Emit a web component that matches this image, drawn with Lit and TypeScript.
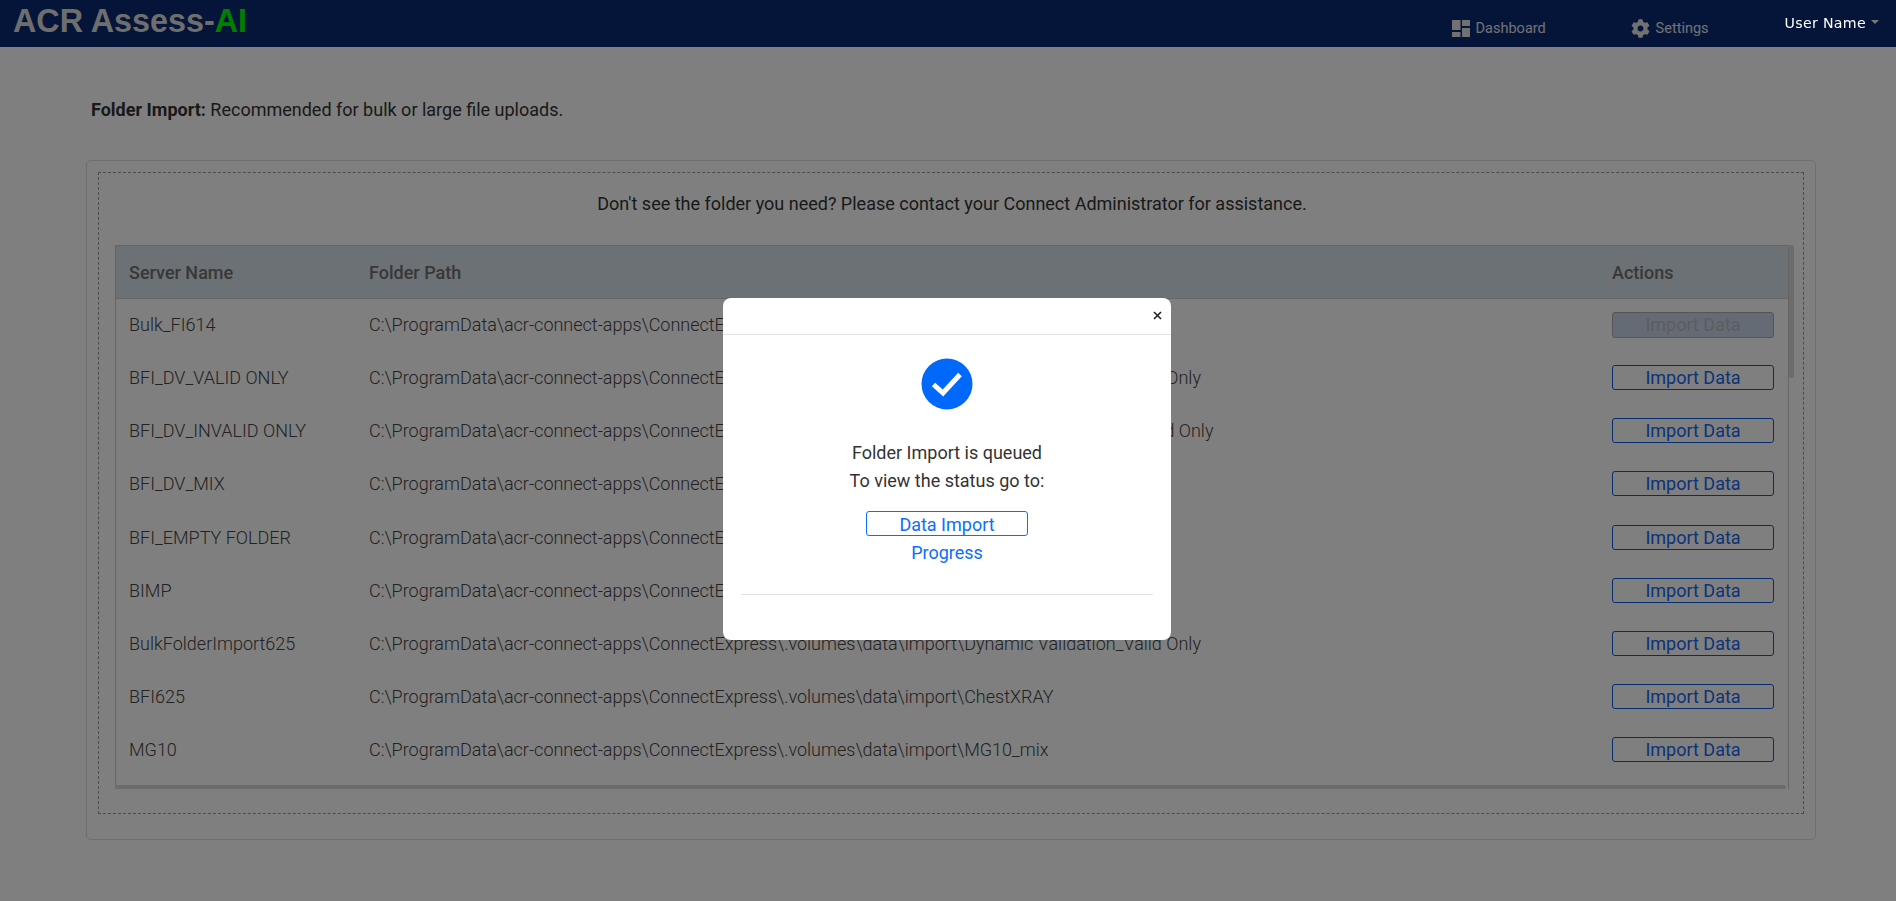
import {LitElement, html, css} from 'lit';
import {customElement} from 'lit/decorators.js';

const BASE = 'C:\\ProgramData\\acr-connect-apps\\ConnectExpress\\.volumes\\data\\import\\';

const rows = [
  {name: 'Bulk_FI614', path: 'Bulk_FI614', disabled: true},
  {name: 'BFI_DV_VALID ONLY', path: 'Dynamic Validation_Valid Only'},
  {name: 'BFI_DV_INVALID ONLY', path: 'Dynamic Validation_Invalid Only'},
  {name: 'BFI_DV_MIX', path: 'BFI_DV_MIX'},
  {name: 'BFI_EMPTY FOLDER', path: 'Empty'},
  {name: 'BIMP', path: 'BIMP'},
  {name: 'BulkFolderImport625', path: 'Dynamic Validation_Valid Only'},
  {name: 'BFI625', path: 'ChestXRAY'},
  {name: 'MG10', path: 'MG10_mix'},
];

const GEAR = 'M487.4 315.7l-42.6-24.6c4.3-23.2 4.3-47 0-70.2l42.6-24.6c4.9-2.8 7.1-8.6 5.5-14-11.1-35.6-30-67.8-54.7-94.6-3.8-4.1-10-5.1-14.8-2.3L380.8 110c-17.9-15.4-38.5-27.3-60.8-35.1V25.8c0-5.6-3.9-10.5-9.4-11.7-36.7-8.2-74.3-7.8-109.2 0-5.5 1.2-9.4 6.1-9.4 11.7V75c-22.2 7.9-42.8 19.8-60.8 35.1L88.7 85.5c-4.9-2.8-11-1.9-14.8 2.3-24.7 26.7-43.6 58.9-54.7 94.6-1.7 5.4.6 11.2 5.5 14L67.3 221c-4.3 23.2-4.3 47 0 70.2l-42.6 24.6c-4.9 2.8-7.1 8.6-5.5 14 11.1 35.6 30 67.8 54.7 94.6 3.8 4.1 10 5.1 14.8 2.3l42.6-24.6c17.9 15.4 38.5 27.3 60.8 35.1v49.2c0 5.6 3.9 10.5 9.4 11.7 36.7 8.2 74.3 7.8 109.2 0 5.5-1.2 9.4-6.1 9.4-11.7v-49.2c22.2-7.9 42.8-19.8 60.8-35.1l42.6 24.6c4.9 2.8 11 1.9 14.8-2.3 24.7-26.7 43.6-58.9 54.7-94.6 1.5-5.5-.7-11.3-5.6-14.1zM256 336c-44.1 0-80-35.9-80-80s35.9-80 80-80 80 35.9 80 80-35.9 80-80 80z';

@customElement('app-root')
export class AppRoot extends LitElement {
  static styles = css`
    :host {
      display: block;
      height: 901px;
      overflow: hidden;
      background: #fff;
      color: #333;
      font-family: Roboto, "Liberation Sans", sans-serif;
      font-size: 18px;
    }

    .navbar {
      display: flex;
      height: 47px;
      background: #0a2a74;
      color: #fff;
    }
    .logo {
      margin: 2px 0 0 13px;
      font-family: "Liberation Sans", Arial, sans-serif;
      font-size: 32.3px;
      line-height: 38px;
      font-weight: 700;
      flex: 1;
      color: #dcdcdc;
    }
    .logo span { color: #00ff00; }
    .nav-link {
      display: flex;
      align-items: center;
      gap: 6px;
      height: 20px;
      margin-top: 18px;
      font-size: 14.5px;
      color: #e2e2e2;
    }
    .nav-link svg { display: block; fill: #e2e2e2; }
    .dash { width: 179px; }
    .settings { width: 154px; }
    .user {
      position: relative;
      z-index: 20;
      display: flex;
      align-items: center;
      gap: 5px;
      height: 20px;
      margin: 13px 17px 0 0;
      font-family: "DejaVu Sans", sans-serif;
      font-size: 14.2px;
      letter-spacing: 0.3px;
      color: #fff;
    }
    .caret {
      border-top: 4px solid #777;
      border-left: 4px solid transparent;
      border-right: 4px solid transparent;
      margin-top: -2px;
    }

    .content { padding: 53px 80px 0 86px; }
    .intro {
      margin: 0 0 40px 5px;
      line-height: 20px;
    }
    .intro b { font-weight: 700; }

    .card {
      height: 680px;
      box-sizing: border-box;
      padding: 11px;
      border: 1px solid #dcdcdc;
      border-radius: 5px;
    }
    .dashed {
      height: 642px;
      box-sizing: border-box;
      padding: 0 14px 0 16px;
      border: 1px dashed #999;
    }
    .note {
      height: 72px;
      box-sizing: border-box;
      padding-bottom: 12px;
      display: flex;
      align-items: center;
      justify-content: center;
    }

    .table-wrap {
      position: relative;
      height: 544px;
      box-sizing: border-box;
      border: 1px solid #ccc;
      border-bottom: 0;
    }
    table {
      width: 100%;
      border-collapse: collapse;
      table-layout: fixed;
    }
    th {
      height: 52px;
      background: #d8e2ea;
      border-bottom: 1px solid #ccc;
      text-align: left;
      font-weight: 500;
      color: #707070;
      padding: 0 13px;
    }
    td {
      height: 53.2px;
      box-sizing: border-box;
      padding: 0 13px 1.5px;
      font-weight: 300;
      color: #444;
      white-space: nowrap;
    }

    .import {
      display: block;
      box-sizing: border-box;
      width: 162px;
      height: 25px;
      padding: 0;
      border: 1px solid #0a5cd8;
      border-radius: 3px;
      background: transparent;
      color: #1a66f0;
      font: 400 18px/23px Roboto, sans-serif;
    }
    .import[disabled] {
      height: 26px;
      border-color: #aaa;
      background: #c8d6ea;
      color: #bbb;
    }

    .thumb-v {
      position: absolute;
      top: -1px;
      right: -6px;
      width: 5px;
      height: 133px;
      background: #d8d8d8;
      border-radius: 3px;
    }
    .thumb-h {
      position: absolute;
      left: -1px;
      right: 2px;
      bottom: 0;
      height: 4px;
      background: #d8d8d8;
      border-radius: 0 3px 3px 0;
    }

    .backdrop {
      position: fixed;
      inset: 0;
      z-index: 10;
      background: rgba(0, 0, 0, 0.5);
    }
    .modal-wrap {
      position: fixed;
      inset: 0;
      z-index: 15;
      display: flex;
      justify-content: center;
      align-items: flex-start;
      padding: 298px 2px 0 0;
    }
    .modal {
      width: 448px;
      height: 342px;
      background: #fff;
      border-radius: 8px;
      text-align: center;
    }
    .modal-head {
      display: flex;
      justify-content: flex-end;
      align-items: center;
      height: 36px;
      padding-right: 9px;
      border-bottom: 1px solid #e2e2e2;
    }
    .modal-head svg { display: block; margin-top: -1px; }
    .modal-body { padding: 23px 18px 0; }
    .check { display: block; margin: 0 auto 29px; }
    .msg { line-height: 27.5px; }
    .go {
      width: 162px;
      margin: 17px auto 0;
      color: #0d6efd;
      line-height: 27px;
    }
    .go div:first-child {
      box-sizing: border-box;
      height: 25px;
      border: 1px solid #0d6efd;
      border-radius: 3px;
      line-height: 25px;
    }
    .go div:last-child { margin-top: 3px; }
    .rule {
      margin-top: 28px;
      border-top: 1px solid #e2e2e2;
    }
  `;

  protected render() {
    return html`
      <nav class="navbar">
        <div class="logo">ACR Assess-<span>AI</span></div>
        <div class="nav-link dash">
          <svg width="18" height="17" viewBox="0 0 18 17">
            <rect x="0" y="0" width="8.5" height="10"></rect>
            <rect x="10" y="0" width="8" height="6"></rect>
            <rect x="0" y="12" width="8.5" height="5"></rect>
            <rect x="10" y="8" width="8" height="9"></rect>
          </svg>
          Dashboard
        </div>
        <div class="nav-link settings">
          <svg width="19" height="19" viewBox="0 0 512 512"><path d=${GEAR}></path></svg>
          Settings
        </div>
        <div class="user">User Name <span class="caret"></span></div>
      </nav>

      <main class="content">
        <p class="intro"><b>Folder Import:</b> Recommended for bulk or large file uploads.</p>
        <section class="card">
          <div class="dashed">
            <div class="note">Don't see the folder you need? Please contact your Connect Administrator for assistance.</div>
            <div class="table-wrap">
              <table>
                <colgroup>
                  <col style="width:240px" />
                  <col />
                  <col style="width:189px" />
                </colgroup>
                <thead>
                  <tr><th>Server Name</th><th>Folder Path</th><th>Actions</th></tr>
                </thead>
                <tbody>
                  ${rows.map(r => html`
                    <tr>
                      <td>${r.name}</td>
                      <td>${BASE}${r.path}</td>
                      <td><button class="import" ?disabled=${r.disabled}>Import Data</button></td>
                    </tr>
                  `)}
                </tbody>
              </table>
              <div class="thumb-v"></div>
              <div class="thumb-h"></div>
            </div>
          </div>
        </section>
      </main>

      <div class="backdrop"></div>
      <div class="modal-wrap">
        <div class="modal">
          <div class="modal-head">
            <svg width="9" height="9" viewBox="0 0 9 9">
              <path d="M1 1l7 7M8 1l-7 7" stroke="#222" stroke-width="1.6" fill="none"></path>
            </svg>
          </div>
          <div class="modal-body">
            <svg class="check" width="52" height="52" viewBox="0 0 52 52">
              <circle cx="26" cy="26" r="25.5" fill="#0068fb"></circle>
              <path d="M12.5 26.5l9.5 8.5L39 16.5" stroke="#fff" stroke-width="5" fill="none"></path>
            </svg>
            <div class="msg">Folder Import is queued<br />To view the status go to:</div>
            <div class="go">
              <div>Data Import</div>
              <div>Progress</div>
            </div>
            <div class="rule"></div>
          </div>
        </div>
      </div>
    `;
  }
}
